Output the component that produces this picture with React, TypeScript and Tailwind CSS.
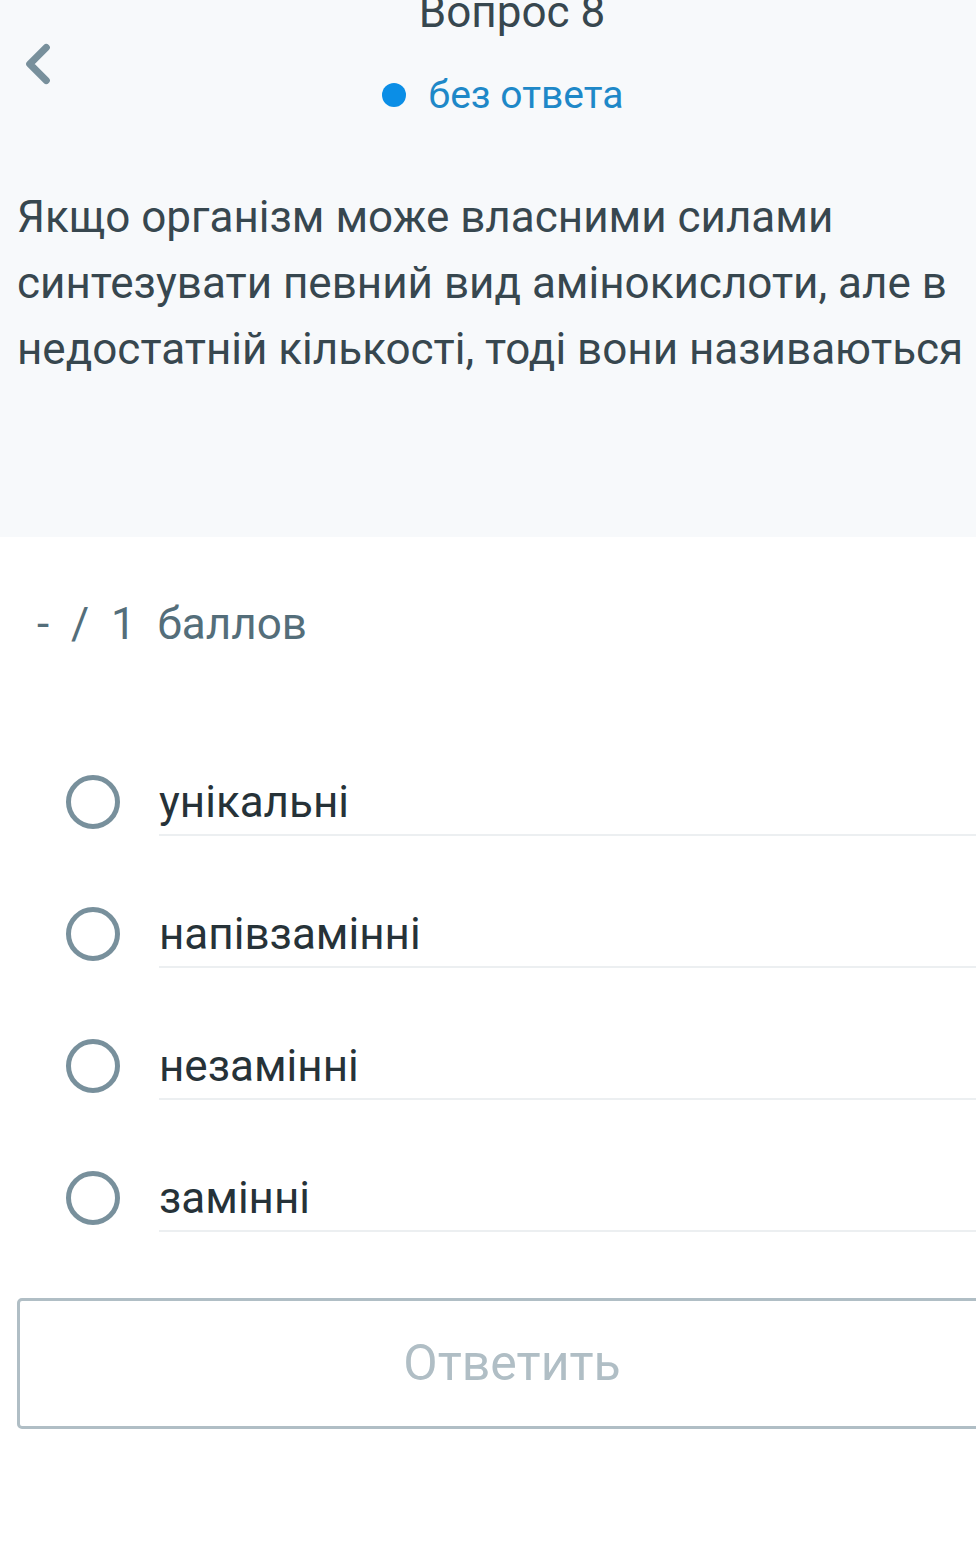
import { ChevronLeft } from 'lucide-react';

const options = ['унікальні', 'напівзамінні', 'незамінні', 'замінні'];

function Radio({ label }: { label: string }) {
  return (
    <div className="flex items-center h-[132px]">
      <div className="w-[159px] flex justify-center pl-[26px] shrink-0">
        <span className="w-[54px] h-[54px] rounded-full border-[5px] border-[#78909c]" />
      </div>
      <div className="flex-1 self-stretch flex items-center border-b-2 border-[#eceff1] mb-[32px] mt-[32px]">
        <span className="text-[44px] leading-none text-[#263238] pt-[2px]">{label}</span>
      </div>
    </div>
  );
}

export default function App() {
  return (
    <div className="w-[976px] h-[1544px] overflow-hidden bg-white" style={{ fontFamily: 'Roboto, "Noto Sans", sans-serif' }}>
      <div className="w-[1024px]">
        {/* Header + question */}
        <div className="bg-[#f7f9fb] h-[537px] flow-root">
          <div className="relative flex flex-col items-center -mt-[12px]">
            <div className="text-[44px] leading-[48px] text-[#37474f]">Вопрос 8</div>
            <div className="flex items-center gap-[23px] mt-[35px] -ml-[19px]">
              <span className="w-[24px] h-[24px] rounded-full bg-[#0b8ee6]" />
              <span className="text-[39px] leading-[48px] text-[#1e88c8]">без ответа</span>
            </div>
            <ChevronLeft className="absolute left-[5px] top-[43px] w-[66px] h-[66px] text-[#78909c]" strokeWidth={2.6} />
          </div>
          <p className="px-[17px] pt-[65px] text-[44px] leading-[66px] text-[#37474f]">
            Якщо організм може власними силами синтезувати певний вид амінокислоти, але в недостатній кількості, тоді вони називаються
          </p>
        </div>

        {/* Score */}
        <div className="pl-[37px] pt-[59px] text-[44px] leading-[56px] text-[#546e7a] whitespace-pre">
          -  /  1  баллов
        </div>

        {/* Options */}
        <div className="mt-[84px]">
          {options.map(o => (
            <Radio key={o} label={o} />
          ))}
        </div>

        {/* Button */}
        <div className="pl-[17px] pr-[17px] mt-[34px]">
          <div className="h-[131px] rounded-[5px] border-[3px] border-[#b0bec5] flex items-center justify-center">
            <span className="text-[50px] text-[#b0bec5]">Ответить</span>
          </div>
        </div>
      </div>
    </div>
  );
}
